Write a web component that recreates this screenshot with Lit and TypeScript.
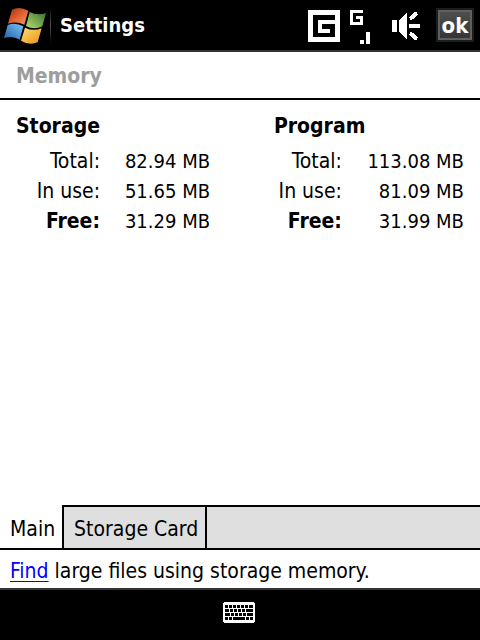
import { LitElement, html, css, svg } from "lit";
import { customElement, state } from "lit/decorators.js";

interface Usage {
  label: string;
  value: string;
  strong?: boolean;
}

const storage: Usage[] = [
  { label: "Total:", value: "82.94 MB" },
  { label: "In use:", value: "51.65 MB" },
  { label: "Free:", value: "31.29 MB", strong: true },
];

const program: Usage[] = [
  { label: "Total:", value: "113.08 MB" },
  { label: "In use:", value: "81.09 MB" },
  { label: "Free:", value: "31.99 MB", strong: true },
];

// Keys of the soft keyboard glyph: [x, y, width]
const keys = [
  [2, 3, 3], [6, 3, 3], [10, 3, 3], [14, 3, 3], [18, 3, 3], [22, 3, 3], [26, 3, 4],
  [2, 7, 4], [7, 7, 3], [11, 7, 3], [15, 7, 3], [19, 7, 3], [23, 7, 7],
  [2, 11, 5], [8, 11, 3], [12, 11, 3], [16, 11, 3], [20, 11, 3], [24, 11, 6],
  [2, 15, 3], [6, 15, 3], [10, 15, 12], [23, 15, 3], [27, 15, 3],
];

@customElement("app-root")
export class AppRoot extends LitElement {
  @state() private tab = "Main";

  static styles = css`
    :host {
      display: flex;
      flex-direction: column;
      min-height: 100vh;
      background: #fff;
      color: #000;
      font: 21px/30px "DejaVu Sans Condensed", "Noto Sans", sans-serif;
    }
    svg {
      display: block;
    }
    button {
      margin: 0;
      padding: 0;
      border: 0;
      background: none;
      color: inherit;
      font: inherit;
    }
    .bar {
      display: flex;
      align-items: center;
      box-sizing: border-box;
      height: 52px;
      padding-right: 6px;
      background: #000;
      border-bottom: 2px solid #333;
      color: #fff;
    }
    .divider {
      width: 1px;
      height: 38px;
      background: linear-gradient(#000, #555, #000);
    }
    .app {
      flex: 1;
      margin: 0;
      padding-left: 9px;
      font-size: 20px;
    }
    .ok {
      box-sizing: border-box;
      width: 38px;
      height: 34px;
      margin-left: 14px;
      border: 2px solid #1c1e1e;
      outline: 2px solid #606060;
      outline-offset: -4px;
      background: linear-gradient(#505050, #333);
      font-weight: bold;
      font-size: 22px;
      line-height: 32px;
    }
    .title {
      margin: 0;
      padding: 9px 16px 7px;
      border-bottom: 2px solid #000;
      color: #9c9e9c;
      font-size: 21px;
    }
    .content {
      flex: 1;
      display: grid;
      grid-template-columns: 19fr 14fr;
      align-content: start;
      padding: 11px 16px;
    }
    .group {
      margin: 0 0 5px;
      font-size: 21px;
    }
    table {
      border-collapse: collapse;
    }
    th,
    td {
      padding: 0;
      text-align: right;
      vertical-align: baseline;
      white-space: nowrap;
    }
    th {
      width: 84px;
      font-weight: normal;
    }
    td {
      width: 110px;
      font-size: 20px;
    }
    .program th {
      width: 68px;
    }
    .program td {
      width: 122px;
    }
    th.strong {
      font-weight: bold;
    }
    .tabs {
      display: flex;
      height: 43px;
      border-bottom: 2px solid #000;
    }
    .tabs::after {
      content: "";
      flex: 1;
      background: #dedfde;
      border-top: 2px solid #000;
    }
    .tab {
      padding: 4px 7px 0 10px;
      border-right: 2px solid #000;
      background: #dedfde linear-gradient(#000, #000) top / 100% 2px no-repeat;
    }
    .tab.active {
      background: #fff;
    }
    .hint {
      margin: 0;
      padding: 6px 10px 2px;
    }
    .hint a {
      color: #00f;
      text-decoration-thickness: 1px;
      text-underline-offset: 3px;
    }
    .bottom {
      display: flex;
      justify-content: center;
      align-items: flex-start;
      box-sizing: border-box;
      height: 52px;
      padding: 12px 2px 0 0;
      border-top: 2px solid #333;
      background: #000;
    }
  `;

  private group(name: string, rows: Usage[], kind: string) {
    return html`<section class=${kind}>
      <h2 class="group" id=${kind}>${name}</h2>
      <table aria-labelledby=${kind}>
        ${rows.map(
          (r) => html`<tr>
            <th scope="row" class=${r.strong ? "strong" : ""}>${r.label}</th>
            <td>${r.value}</td>
          </tr>`
        )}
      </table>
    </section>`;
  }

  render() {
    return html`
      <header class="bar">
        <button aria-label="Start">
          <svg width="50" height="50" viewBox="0 0 150 150">
            <defs>
              <linearGradient id="r" x1="0" y1="0" x2="1" y2="1"><stop offset="0" stop-color="#9c3010" /><stop offset=".5" stop-color="#e06030" /><stop offset="1" stop-color="#f0a060" /></linearGradient>
              <linearGradient id="g" x1="1" y1="0" x2="0" y2="1"><stop offset="0" stop-color="#35702c" /><stop offset="1" stop-color="#b4e070" /></linearGradient>
              <linearGradient id="b" x1="0" y1="1" x2="1" y2="0"><stop offset="0" stop-color="#1e5ca8" /><stop offset="1" stop-color="#7cc4f4" /></linearGradient>
              <linearGradient id="y" x1="1" y1="1" x2="0" y2="0"><stop offset="0" stop-color="#e89018" /><stop offset="1" stop-color="#ffe070" /></linearGradient>
            </defs>
            <path fill="url(#r)" d="M36 29Q58 18 85 32L73 74Q50 62 24 71Z" />
            <path fill="url(#g)" d="M89 36Q112 48 138 39L127 79Q103 91 78 78Z" />
            <path fill="url(#b)" d="M23 75Q46 66 70 79L59 119Q37 106 12 115Z" />
            <path fill="url(#y)" d="M75 83Q100 95 125 85L113 127Q88 138 63 122Z" />
          </svg>
        </button>
        <span class="divider"></span>
        <h1 class="app">Settings</h1>
        <svg width="114" height="50" viewBox="0 0 114 50" fill="#fff" shape-rendering="crispEdges" role="img" aria-label="GPRS, signal, sound on">
          <path d="M0 10H32V42H0Z" />
          <path fill="#000" d="M5 15H27V20H10V33H22V29H14V24H27V37H5Z" />
          <path d="M42 10H55V13H45V22H52V19H48V16H55V25H42Z" />
          <path d="M52 40H56V44H52ZM58 32H62V44H58Z" />
          <path d="M84 20H89V32H84ZM91 20L98 13H99V39H98L91 32ZM101 24H112V28H101Z" />
          <path fill="none" stroke="#fff" stroke-width="4" d="M102 19L109 13M102 33L109 39" />
        </svg>
        <button class="ok">ok</button>
      </header>
      <h1 class="title">Memory</h1>
      <main class="content">
        ${this.group("Storage", storage, "storage")}
        ${this.group("Program", program, "program")}
      </main>
      <nav class="tabs" role="tablist">
        ${["Main", "Storage Card"].map(
          (t) => html`<button role="tab" aria-selected=${t === this.tab} class="tab ${t === this.tab ? "active" : ""}" @click=${() => (this.tab = t)}>${t}</button>`
        )}
      </nav>
      <p class="hint"><a href="#find">Find</a> large files using storage memory.</p>
      <footer class="bottom">
        <button aria-label="Keyboard">
          <svg width="32" height="21" viewBox="0 0 32 21" shape-rendering="crispEdges">
            <path fill="#fff" d="M1 0H31V1H32V20H31V21H1V20H0V1H1Z" />
            ${keys.map(([x, y, w]) => svg`<rect x=${x} y=${y} width=${w} height="3" />`)}
          </svg>
        </button>
      </footer>
    `;
  }
}
